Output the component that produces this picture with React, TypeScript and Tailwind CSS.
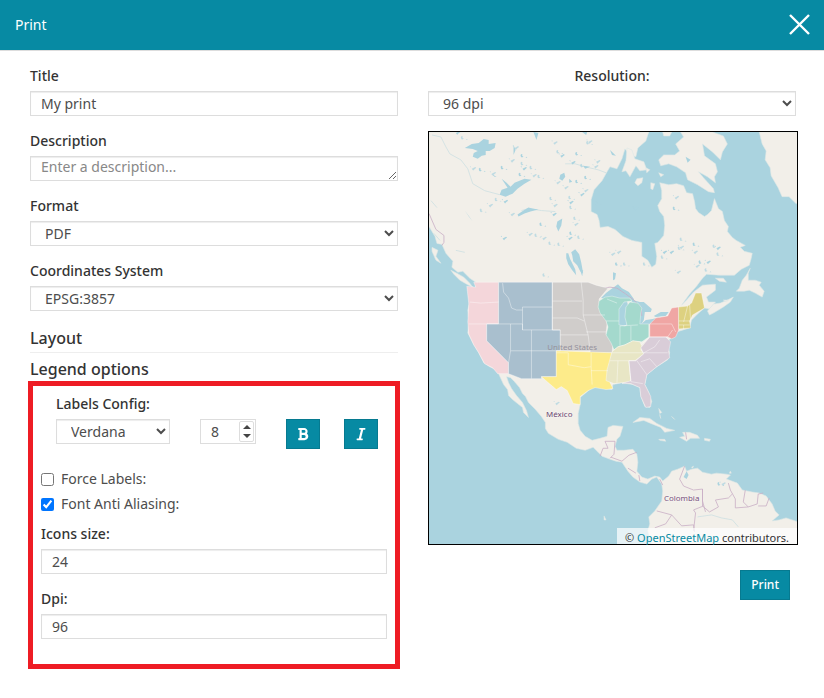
import { useState, type ReactNode } from "react";
import { FaBold, FaItalic } from "react-icons/fa";

const fieldClass =
  "block h-[25px] w-full rounded-none border border-[#dddddd] bg-white px-[10px] text-sm leading-5 text-[#4d4d4d] shadow-[inset_0_1px_1px_rgba(0,0,0,0.075)] outline-none placeholder:text-[#888888]";
const selectClass =
  "block h-[25px] w-full rounded-none border border-[#dddddd] bg-white px-[10px] text-sm leading-5 text-[#4d4d4d] shadow-[inset_0_1px_1px_rgba(0,0,0,0.075)] outline-none";

function Field({ id, label, centered, children }: { id: string; label: string; centered?: boolean; children: ReactNode }) {
  return (
    <div className="mb-[15px]">
      <label
        htmlFor={id}
        className={centered ? "mb-[5px] block text-center text-sm font-medium leading-5" : "mb-[5px] block text-sm font-medium leading-5"}
      >
        {label}
      </label>
      {children}
    </div>
  );
}

const land = [
  // American mainland
  "M428 131 L428 226 434 236 436 243 441 244 445 253 452 261 451 267 457 272 462 271 469 278 475 282 475 290 472 293 471 289 467 287 468 293 469 301 467 310 468 322 467 333 473 345 478 353 483 363 489 367 495 370 498 374 503 385 507 390 508 396 512 400 517 404 522 408 523 413 528 418 526 411 522 403 516 396 511 389 508 383 506 377 510 378 514 382 519 388 522 394 525 397 528 403 535 410 541 417 545 423 545 429 548 434 558 440 567 443 576 449 585 451 593 448 598 453 602 457 610 460 616 462 622 463 628 472 633 478 640 483 647 485 652 480 657 478 662 485 663 492 662 502 655 512 649 518 650 525 648 532 652 546 L799 546 799 523 787 519 780 521 773 522 780 516 776 512 773 505 767 497 760 494 753 493 743 491 738 484 727 480 731 476 727 475 717 474 712 475 703 473 698 469 692 470 687 472 685 467 678 470 672 472 669 477 663 482 660 478 655 477 648 480 642 478 637 472 638 463 637 455 633 450 624 451 617 451 615 447 617 440 620 437 623 427 613 426 608 428 607 437 600 439 592 441 585 437 580 431 578 424 578 414 580 405 580 398 586 393 592 388 598 387 605 389 612 390 613 385 622 383 633 385 640 388 641 397 645 407 650 408 652 402 649 393 645 385 647 375 657 367 668 360 670 353 667 342 672 338 677 332 690 328 692 320 698 314 705 308 710 309 716 302 709 302 707 297 716 290 716 284 703 285 694 292 687 300 682 305 690 294 697 286 703 278 707 274 720 275 735 275 742 269 750 265 752 258 753 253 745 251 741 247 746 245 737 240 733 237 728 231 729 226 725 220 723 211 719 208 715 198 713 206 712 210 708 214 705 216 699 212 696 208 695 201 693 193 687 192 684 185 677 183 669 184 660 182 662 190 662 198 658 205 660 211 664 216 665 225 664 235 658 242 655 243 657 256 656 264 652 267 648 260 642 256 642 242 632 240 623 236 615 229 608 226 600 227 599 220 597 214 591 211 591 199 594 189 602 180 607 171 610 166 617 168 622 158 625 148 630 154 636 156 638 147 646 140 649 131 Z",
  // Greenland
  "M760 131 L763 143 767 150 766 159 771 167 772 175 779 187 783 196 790 196 797 203 799 203 799 131 Z",
  // Baffin Island
  "M681 131 L684 136 676 143 680 150 675 154 664 154 659 159 661 165 669 163 677 166 686 172 688 179 698 184 709 191 715 192 714 188 704 177 699 171 708 176 716 182 715 176 718 171 716 163 705 155 703 143 713 151 721 159 723 151 728 143 724 135 713 131 Z",
  // Southampton and the islands around it
  "M627 147 L632 149 635 158 644 161 647 169 640 170 636 165 630 176 626 170 622 171 626 160 Z",
  "M637 178 L643 177 642 182 638 185 635 182 Z M651 182 L655 183 653 189 651 188 Z M663 131 L672 131 670 135 664 135 Z M659 172 L664 174 661 176 Z M646 167 L650 169 647 172 Z",
  // Vancouver Island and Haida Gwaii
  "M450 270 L456 273 463 277 469 283 472 287 466 284 459 280 453 274 Z M431 247 L437 250 435 256 440 263 435 260 431 251 Z",
  // Newfoundland, Nova Scotia and Anticosti
  "M751 268 L747 275 743 280 740 288 737 291 745 291 750 290 756 293 763 297 765 291 760 285 762 282 756 280 749 280 749 273 Z",
  "M708 311 L714 304 721 303 728 300 734 297 731 302 724 307 714 313 710 315 Z M716 278 L724 278 727 282 720 281 Z M724 300 L729 300 727 302 Z",
  // Caribbean
  "M633 423 L640 418 650 419 657 424 667 429 675 431 665 433 661 428 651 424 644 421 Z",
  "M683 433 L690 433 698 436 700 439 691 439 687 442 680 438 685 437 Z M659 440 L665 440 666 442 660 441 Z M705 439 L711 440 710 442 705 441 Z",
  "M659 409 L662 413 660 414 Z M660 415 L661 419 Z M672 417 L675 420 Z M604 517 L606 521 604 521 Z M692 468 L694 467 693 469 Z M731 472 L732 474 730 474 Z",
];

const lakes = [
  "M464 147 L471 143 478 142 483 138 488 139 488 143 495 142 494 147 489 150 485 150 485 154 481 155 477 158 472 156 473 152 477 150 472 148 Z",
  "M501 178 L506 182 510 186 514 182 519 180 524 178 531 179 524 183 517 188 512 193 505 196 499 194 501 189 507 187 Z",
  "M517 214 L523 210 528 207 532 208 538 209 530 211 524 213 518 216 Z",
  "M560 174 L564 172 565 176 562 180 559 178 Z M557 221 L562 218 561 225 558 231 556 226 Z",
  "M571 252 L575 249 579 254 581 262 583 273 580 271 577 265 573 261 572 255 Z",
  "M566 253 L568 253 570 259 572 263 575 269 576 275 572 270 568 264 566 258 Z",
  "M490 173 L496 176 494 176 Z M513 144 L515 149 513 154 Z M533 131 L538 132 536 139 Z M583 165 L590 166 585 168 Z M610 149 L616 155 612 154 Z M569 178 L572 181 569 182 Z M582 131 L587 131 586 134 Z M464 210 L472 221 468 216 Z M687 472 L689 476 687 480 684 478 Z M686 156 L691 159 688 162 Z",
  // Great Lakes
  "M601 298 L606 293 611 289 618 284 622 288 629 292 634 299 634 303 628 299 618 298 611 297 606 299 Z",
  "M618 304 L627 301 628 305 626 315 627 325 619 327 618 316 Z",
  "M633 300 L640 302 644 302 652 309 651 312 645 312 644 320 641 325 639 324 640 313 638 306 633 304 Z",
  "M638 327 L646 320 653 319 660 317 652 323 642 327 Z M654 316 L661 312 669 312 666 316 656 317 Z",
  "M613 272 L616 273 615 279 613 280 Z M580 270 L583 270 582 276 Z",
];

const streams =
  "M431 134 L440 136 445 146 449 153 460 159 467 168 472 183 484 190 499 194 M521 210 L528 208 541 210 555 211 M565 163 L575 163 585 166 598 169 606 172 M698 518 L712 516 722 519 733 521 739 528 M433 233 L439 240 M455 250 L464 252 M430 200 L436 207";

// Centre points of the small Canadian lakes
const ponds: number[][] = [
  [457, 132], [461, 137], [473, 168], [479, 169], [493, 173], [495, 199], [505, 201], [480, 210], [490, 205], [501, 167],
  [516, 147], [521, 163], [524, 168], [530, 167], [534, 175], [521, 155], [555, 142], [538, 176], [573, 162], [581, 165],
  [566, 187], [576, 181], [558, 182], [569, 197], [571, 202], [550, 198], [555, 205], [540, 224], [530, 234], [535, 235],
  [504, 238], [549, 243], [544, 238], [570, 233], [576, 224], [574, 218], [554, 214], [596, 203], [586, 190], [585, 177],
  [590, 141], [587, 142], [562, 155], [557, 151], [598, 161], [576, 153], [512, 214], [543, 275], [570, 238], [558, 244],
  [596, 166], [519, 174], [512, 160], [570, 207], [582, 194], [578, 237], [613, 254], [616, 264], [619, 252], [644, 264],
  [672, 252], [679, 248], [682, 247], [694, 244], [696, 252], [714, 246], [719, 248], [718, 254], [698, 266], [700, 262],
  [679, 272], [706, 270], [665, 252], [662, 257], [677, 197], [674, 208], [636, 208], [681, 239], [709, 262], [624, 264],
  [724, 485], [719, 485], [557, 404],
];

const regions: { color: string; d: string }[] = [
  { color: "#f4d6da", d: "M466 286 L475 287 473 282 498 282 498 324 486 324 486 341 508 363 508 374 497 374 492 368 484 364 478 353 473 345 468 334 467 322 468 304 Z" },
  { color: "#a9bfce", d: "M498 282 L552 282 552 330 560 330 560 351 556 351 556 377 541 377 541 379 521 379 508 374 508 363 486 341 486 324 498 324 Z" },
  { color: "#d0cdcb", d: "M552 282 L588 282 596 285 608 288 599 299 599 309 605 315 607 324 606 334 613 344 612 353 590 353 590 351 560 351 560 330 552 330 Z" },
  { color: "#a4d9cd", d: "M599 301 L605 297 612 296 620 298 630 298 632 301 624 302 619 309 619 325 625 326 627 325 625 317 626 307 630 302 638 303 642 308 641 313 640 324 649 324 649 337 642 342 633 341 625 345 618 347 614 350 611 343 606 335 608 327 606 321 600 313 598 307 Z" },
  { color: "#fdeb8a", d: "M556 351 L612 353 608 370 610 383 613 389 606 390 595 388 588 391 580 397 580 405 573 404 567 391 561 387 556 390 549 384 541 377 556 377 Z" },
  { color: "#e8e6c5", d: "M612 352 L618 347 625 345 633 341 640 342 642 346 641 350 644 354 635 361 629 361 631 382 614 384 606 381 607 370 Z" },
  { color: "#d9cdd8", d: "M641 348 L650 337 666 337 671 342 669 352 670 358 657 367 647 375 645 385 651 397 651 407 646 408 641 397 640 388 631 384 622 384 631 381 629 361 636 361 644 354 Z" },
  { color: "#f0a6a4", d: "M650 324 L656 318 668 316 672 308 679 307 679 330 676 337 672 339 668 337 650 337 Z" },
  { color: "#ddd180", d: "M679 307 L688 306 692 303 696 293 702 293 705 308 693 315 690 321 691 328 679 329 Z" },
];

const stateLines =
  "M469 302 L480 303 498 302 M498 324 L468 324 M502 283 L503 292 508 298 511 308 516 310 522 310 M522 307 L552 307 M522 307 L522 330 M510 324 L522 324 522 330 552 330 M498 324 L510 324 510 351 M531 330 L531 379 M510 351 L560 351 M510 351 L508 363 M552 282 L552 330 M552 301 L582 301 M552 318 L577 318 584 321 M560 335 L588 335 M552 330 L560 330 M581 282 L583 300 583 315 588 335 590 351 M583 315 L605 315 M586 332 L606 332 M556 353 L568 353 568 365 584 368 591 367 591 353 M591 371 L608 371 M591 367 L592 385 M620 326 L620 346 M606 321 L619 321 M631 326 L631 341 M620 326 L638 325 M612 353 L668 353 M610 361 L636 361 M618 361 L617 383 M629 361 L631 382 643 384 M637 361 L647 375 M641 362 L650 359 657 367 M644 353 L655 347 660 340 M650 337 L641 345 M650 324 L672 324 M650 337 L668 337 673 330 M672 324 L676 332 M688 306 L684 322 M690 304 L691 320 M679 321 L691 321 M679 325 L690 325 M684 325 L684 329 M607 299 L617 303";

const borders =
  "M428 213 L435 229 443 235 443 242 441 245 M603 288 L610 287 617 288 626 294 634 300 641 307 642 316 M600 457 L603 449 608 449 605 442 615 442 M615 442 L614 455 610 459 M611 458 L622 462 629 456 637 453 M628 469 L636 474 M639 476 L640 482 M660 480 L663 486 M685 467 L680 480 684 487 694 491 703 490 703 502 706 513 M703 490 L703 507 710 513 719 508 716 501 729 499 733 495 M729 484 L731 491 736 500 736 509 749 508 758 505 759 495 764 494 M746 491 L744 503 749 508 M657 512 L672 516 682 527 694 526 695 533 M704 507 L694 511 696 514 694 532 M655 529 L666 525 672 516 M686 433 L687 440 M759 507 L767 507 770 499";

function PrintMap() {
  return (
    <svg viewBox="428 131 370 414" className="block h-auto w-full bg-[#aad3df]" role="img" aria-label="Map of North America">
      <g fill="#f2efe9" stroke="#dde8e6" strokeWidth="0.6">
        {land.map((d) => <path key={d} d={d} />)}
      </g>
      <path d={streams} fill="none" stroke="#cddfe2" strokeWidth="0.8" />
      <g fill="#aad3df">
        {lakes.map((d) => <path key={d} d={d} />)}
        {ponds.map(([x, y], i) => (
          <path
            key={i}
            opacity={i % 3 ? 0.7 : 1}
            d={
              i % 2
                ? `M${x - 1} ${y - 1} l1 -1 1 .6 -.4 1.2 1.4 1 -1.6 .8 -1 -.6z M${x + 4} ${y + 2} l1.2 -1 .6 1z`
                : `M${x - 2} ${y} l2 -1 1.5 -.8 1 .8 -2 1.6 -1 1.2 -.8 -.8z M${x - 4} ${y - 2} l1 -.6 .4 1.2z`
            }
          />
        ))}
      </g>
      <path d={borders} fill="none" stroke="#c9aec5" strokeWidth="0.8" />
      {regions.map((r) => <path key={r.color} d={r.d} fill={r.color} stroke="#ffffff" strokeOpacity="0.5" strokeWidth="0.7" />)}
      <path d={stateLines} fill="none" stroke="#ffffff" strokeOpacity="0.5" strokeWidth="0.8" />
      <g fontFamily="'Noto Sans', sans-serif" fontSize="8" textAnchor="middle">
        <text x="572" y="350" fill="#96929d">United States</text>
        <text x="559" y="418" fill="#6b4671" stroke="#f8f6f2" strokeWidth="1" paintOrder="stroke">México</text>
        <text x="682" y="502" fill="#77507d" stroke="#f8f6f2" strokeWidth="1" paintOrder="stroke">Colombia</text>
      </g>
    </svg>
  );
}

export default function App() {
  const [size, setSize] = useState(8);
  return (
    <main className="min-h-screen bg-white font-['Noto_Sans',sans-serif] text-sm text-[#333333]">
      <header className="flex h-[51px] items-center justify-between border-b border-[#dddddd] bg-[#078aa3] pl-[15px] pr-[14px] text-white">
        <h1 className="text-sm leading-5">Print</h1>
        <button type="button" aria-label="Close" className="-mt-0.5">
          <svg viewBox="0 0 21 21" className="size-[21px]" fill="none" stroke="currentColor" strokeWidth="2.4">
            <path d="M1 1 20 20M20 1 1 20" />
          </svg>
        </button>
      </header>

      <div className="grid grid-cols-2 gap-[30px] pb-[30px] pl-[30px] pr-[28px] pt-[15px]">
        <form onSubmit={(e) => e.preventDefault()}>
          <Field id="title" label="Title">
            <input id="title" type="text" defaultValue="My print" className={fieldClass} />
          </Field>
          <Field id="description" label="Description">
            <textarea id="description" rows={1} placeholder="Enter a description..." className={fieldClass} />
          </Field>
          <Field id="format" label="Format">
            <select id="format" className={selectClass}>
              <option>PDF</option>
            </select>
          </Field>
          <Field id="crs" label="Coordinates System">
            <select id="crs" className={selectClass}>
              <option>EPSG:3857</option>
            </select>
          </Field>

          <h2 className="border-b border-[#eeeeee] pb-0.5 text-base font-medium leading-6">Layout</h2>
          <h2 className="pt-1 text-base font-medium leading-6">Legend options</h2>

          <section className="-mx-0.5 border-[5px] border-[#ee1c24] px-2 pb-[10px] pt-2">
            <div className="pl-[15px]">
              <label htmlFor="font" className="mb-[5px] block text-sm font-medium leading-5">Labels Config:</label>
              <div className="flex items-start">
                <select id="font" className={`${selectClass} max-w-[114px]`}>
                  <option>Verdana</option>
                </select>
                <div className="ml-[30px] flex h-[25px] w-14 shrink-0 border border-[#dddddd]">
                  <input
                    type="text"
                    inputMode="numeric"
                    aria-label="Font size"
                    value={size}
                    onChange={(e) => setSize(Number(e.target.value) || 0)}
                    className="w-0 grow pl-[10px] text-sm leading-5 text-[#4d4d4d] outline-none"
                  />
                  <div className="m-[1px] flex w-[15px] flex-col rounded-[2px] border border-[#dddddd]">
                    <button type="button" aria-label="Increase" onClick={() => setSize(size + 1)} className="flex grow items-center justify-center">
                      <svg viewBox="0 0 8 4" className="h-1 w-2" fill="#444444"><path d="M0 4 4 0 8 4z" /></svg>
                    </button>
                    <button type="button" aria-label="Decrease" onClick={() => setSize(size - 1)} className="flex grow items-center justify-center">
                      <svg viewBox="0 0 8 4" className="h-1 w-2" fill="#444444"><path d="M0 0 4 4 8 0z" /></svg>
                    </button>
                  </div>
                </div>
                <button type="button" aria-label="Bold" className="ml-[30px] flex h-[30px] w-[34px] shrink-0 items-center justify-center border border-[#067a90] bg-[#078aa3] text-white">
                  <FaBold className="size-[14px]" />
                </button>
                <button type="button" aria-label="Italic" className="ml-6 flex h-[30px] w-[34px] shrink-0 items-center justify-center border border-[#067a90] bg-[#078aa3] text-white">
                  <FaItalic className="size-[14px]" />
                </button>
              </div>
            </div>

            <div className="mb-[10px] mt-5 flex flex-col gap-[5px] text-[#4d4d4d]">
              <label className="flex items-center gap-[7px] leading-5">
                <input type="checkbox" className="size-[13px]" />
                Force Labels:
              </label>
              <label className="flex items-center gap-[7px] leading-5">
                <input type="checkbox" defaultChecked className="size-[13px]" />
                Font Anti Aliasing:
              </label>
            </div>

            <Field id="icons" label="Icons size:">
              <input id="icons" type="text" defaultValue="24" className={fieldClass} />
            </Field>
            <Field id="dpi" label="Dpi:">
              <input id="dpi" type="text" defaultValue="96" className={fieldClass} />
            </Field>
          </section>
        </form>

        <div>
          <Field id="resolution" label="Resolution:" centered>
            <select id="resolution" className={selectClass}>
              <option>96 dpi</option>
            </select>
          </Field>
          <div className="relative -mr-0.5 border border-black">
            <PrintMap />
            <p className="absolute bottom-0 right-0 h-4 bg-white/70 px-2 text-[11px] leading-5">
              © <a href="#osm" className="text-[#078aa3]">OpenStreetMap</a> contributors.
            </p>
          </div>
          <div className="mt-[25px] flex justify-end pr-1.5">
            <button type="button" className="h-[30px] border border-[#067a90] bg-[#078aa3] px-[10px] text-xs font-medium text-white">
              Print
            </button>
          </div>
        </div>
      </div>
    </main>
  );
}
